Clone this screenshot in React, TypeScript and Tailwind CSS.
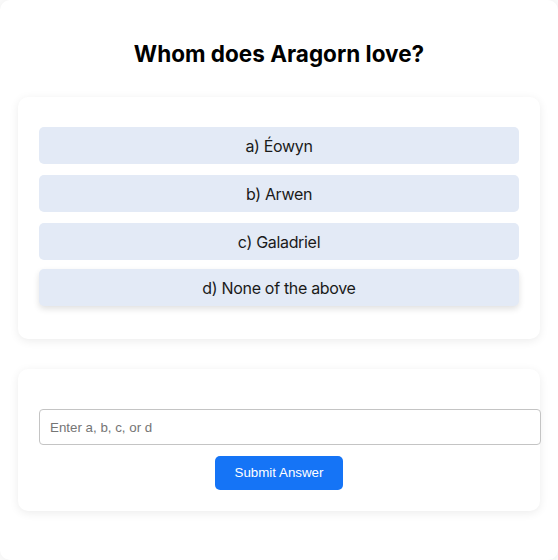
import React, { useState } from 'react';

const options = ['a) Éowyn', 'b) Arwen', 'c) Galadriel', 'd) None of the above'];

function App() {
  const [answer, setAnswer] = useState('');

  return (
    <div className="min-h-[560px] bg-[#fafafa]">
      <div className="min-h-[560px] rounded-[10px] bg-white px-[18px] pt-10 pb-12 shadow-[0_0_8px_rgba(0,0,0,0.04)] font-['Inter',sans-serif]">
        <h1 className="mb-[29px] text-center text-[22.5px] font-bold leading-7 text-black">
          Whom does Aragorn love?
        </h1>

        <div className="rounded-[10px] bg-white px-[21px] pt-[30px] pb-[31px] shadow-[0_2px_10px_rgba(0,0,0,0.08)]">
          <div className="flex flex-col gap-[11px]">
            {options.map((opt, i) => (
              <button
                key={opt}
                className={`h-[37px] w-full rounded-[5px] bg-[#e3eaf6] text-center text-base tracking-[-0.02em] text-[#1a1a1a] ${
                  i === 3 ? '-translate-y-[2px] shadow-[0_3px_6px_rgba(0,0,0,0.12)]' : ''
                }`}
              >
                {opt}
              </button>
            ))}
          </div>
        </div>

        <div className="mt-[30px] rounded-[10px] bg-white px-[21px] pt-10 pb-[21px] shadow-[0_2px_10px_rgba(0,0,0,0.08)]">
          <input
            value={answer}
            onChange={e => setAnswer(e.target.value)}
            placeholder="Enter a, b, c, or d"
            className="box-content block h-[34px] w-full rounded-[4px] border border-[#c4c4c4] px-[10px] font-['Liberation_Sans',Arial,sans-serif] text-[13.333px] text-[#222] placeholder:text-[#757575]"
          />
          <div className="mt-[11px] flex justify-center">
            <button className="h-[34px] w-32 rounded-[5px] bg-[#1574f6] font-['Liberation_Sans',Arial,sans-serif] text-[13.333px] text-white">
              Submit Answer
            </button>
          </div>
        </div>
      </div>
    </div>
  );
}

export default App;
